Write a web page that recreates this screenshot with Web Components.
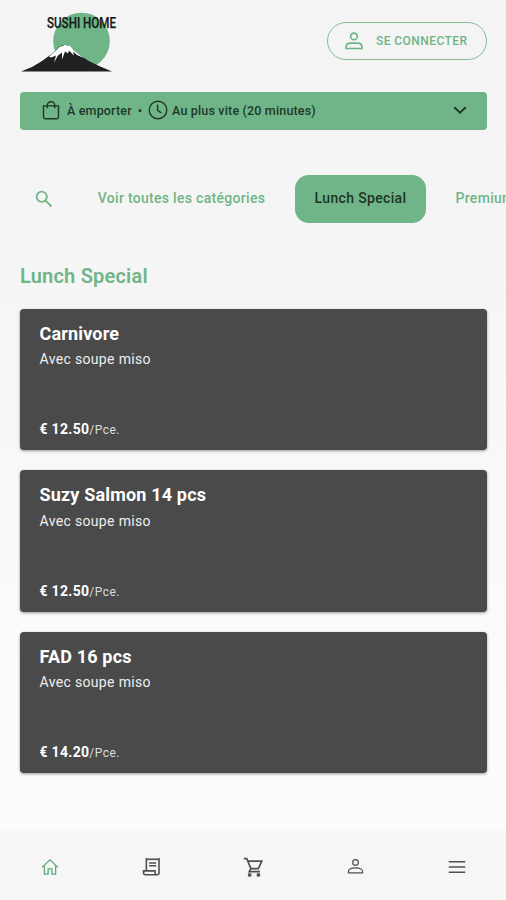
<!DOCTYPE html>
<html lang="fr">
<head>
<meta charset="utf-8">
<title>Sushi Home</title>
<style>
html,body{margin:0;height:100%}
body{font-family:Roboto,"Liberation Sans",sans-serif;overflow:hidden;--green:#70b587;--ink:#20382a}
</style>
</head>
<body>
<sushi-app></sushi-app>
<script>
const define = (name, html, setup) => customElements.define(name, class extends HTMLElement {
  connectedCallback() {
    if (this.shadowRoot) return;
    const t = document.createElement('template');
    t.innerHTML = html;
    this.attachShadow({mode: 'open'}).append(t.content.cloneNode(true));
    if (setup) setup(this, this.shadowRoot);
  }
});

const icons = {
  user: '<circle cx="12" cy="6.500" r="4"/><path d="M2.500 21v-2c0-3 2.200-4.500 5-4.500h9c2.800 0 5 1.500 5 4.500v2z"/>',
  person: '<circle cx="12" cy="6.200" r="4"/><path d="M2 21v-1.500c0-3.600 4.500-5.500 10-5.500s10 1.900 10 5.500V21z"/>',
  bag: '<path d="M3 7h18v13.500a2 2 0 0 1-2 2H5a2 2 0 0 1-2-2zM7.500 10V6.500a4.500 4.500 0 0 1 9 0V10"/>',
  clock: '<circle cx="12" cy="12" r="10.500"/><path d="M11.500 5.500v7l4.500 3"/>',
  chevron: '<path d="M3.500 8l8.500 8 8.500-8"/>',
  search: '<circle cx="9" cy="9" r="6.800"/><path d="M13.700 13.700l8.300 8.300"/>',
  home: '<path d="M1.500 12.500L12 2.500l10.500 10M4.500 10v11.500h5V14.500h5v7h5V10"/>',
  receipt: '<path d="M5.500 17V2.500l2 .7 2-.7 2 .7 2-.7 2 .7 2-.7 2 .7 2-.7V20a2.500 2.500 0 0 1-2.500 2.500H4.500A2.500 2.500 0 0 1 2 20v-2.500h14.500V20a2.500 2.500 0 0 0 2.800 2.500M9 7.500h9M9 11h9"/>',
  cart: '<path d="M1 2h3.500l5 12h9L22.500 5H6M9.500 14l-2 3.500h13"/><circle cx="8" cy="21.500" r="1.300"/><circle cx="18.500" cy="21.500" r="1.300"/>',
  menu: '<path d="M1 5h22M1 12h22M1 19h22"/>'
};
define('ui-icon', `<style>:host{display:block;flex:none;width:var(--s,20px);height:var(--s,20px)}svg{display:block;width:100%;height:100%;fill:none;stroke:currentColor;stroke-width:var(--w,2)}</style><svg viewBox="0 0 24 24"></svg>`,
  (el, root) => { root.querySelector('svg').innerHTML = icons[el.getAttribute('name')]; });

define('brand-logo', `<style>:host{display:block;width:100px;height:64px}svg{display:block}text{font:500 14.500px Roboto,sans-serif}</style>
<svg width="100" height="64" viewBox="20 10 100 64">
<circle cx="81.500" cy="41" r="28.300" fill="#70b587"/>
<path d="M21 71.500l11-4.500 10-6 11-8 7-7 3-.5 2-1 2 1.500 3-.5 6 7 12 8 10 5 14 6z" fill="#202122"/>
<path d="M49 56.500l6-5 5-5 3-.5 2-1.500 2 1.500 3-.5 5 6 9 6.500-7-3-4-3.500 1 4-5-5-1 3-3-2-3 8 0-7-4 3-4 7 2-7-5 2z" fill="#fff"/>
<text x="47" y="28" textLength="69" lengthAdjust="spacingAndGlyphs" fill="#151c18" stroke="#151c18" stroke-width=".25">SUSHI HOME</text>
</svg>`);

define('login-button', `<style>:host{display:flex;box-sizing:border-box;align-items:center;width:160px;height:38px;border:1.300px solid #82bd96;border-radius:20px;color:#70b587;padding:0 0 1px 16px;gap:12px;font-size:12px;font-weight:500;letter-spacing:.44px;white-space:nowrap}ui-icon{--s:20px;--w:2}</style><ui-icon name="user"></ui-icon><slot></slot>`);

define('order-bar', `<style>:host{display:flex;box-sizing:border-box;align-items:center;height:38.500px;margin:0 19px 0 20px;padding:0 19px 1.500px 21px;border-radius:4px;background:var(--green);color:var(--ink);font-size:12.500px;font-weight:500;letter-spacing:.17px;white-space:nowrap}
ui-icon{--s:20px;--w:1.700}.mode{margin-left:6px;width:65px}.dot{width:16px;text-align:center}.when{margin-left:4px}.end{margin-left:auto;--s:16px;--w:3}</style>
<ui-icon name="bag"></ui-icon><span class="mode"><slot name="mode"></slot></span><span class="dot">•</span><ui-icon name="clock"></ui-icon><span class="when"><slot name="when"></slot></span><ui-icon class="end" name="chevron"></ui-icon>`);

define('category-tab', `<style>:host{display:flex;flex:none;box-sizing:border-box;align-items:center;justify-content:center;height:48px;padding:0 19.500px 2px;border-radius:14px;color:var(--green);font-size:14px;font-weight:500;letter-spacing:.3px;white-space:nowrap}:host([active]){background:var(--green);color:#1c3526;letter-spacing:.35px;width:131px;padding:0 0 2px}:host([all]){width:208px;padding:0 0 2px 1px}</style><slot></slot>`);
define('category-tabs', `<style>:host{display:flex;align-items:center;height:48px;padding-left:35px;overflow:hidden}ui-icon{color:var(--green);--s:18px;--w:2.400;margin:0 24px 1px 0}</style><ui-icon name="search"></ui-icon><slot></slot>`);

define('product-card', `<style>:host{display:flex;flex-direction:column;box-sizing:border-box;height:141.500px;padding:14px 20px 11px 19.500px;border-radius:4px;background:#4a4a4a;color:#fff;box-shadow:0 1px 3px #0006}
.n{font-size:18px;line-height:22px;font-weight:700;letter-spacing:.17px}.d{font-size:14px;line-height:20px;margin-top:4.500px;letter-spacing:.34px;color:#eee}.p{margin-top:auto;font-size:14px;line-height:18px;font-weight:700;letter-spacing:.3px}small{font-size:12px;font-weight:400;color:#ddd;letter-spacing:.45px}</style>
<div class="n"><slot name="name"></slot></div><div class="d"><slot name="info"></slot></div><div class="p"><slot name="price"></slot><small>/Pce.</small></div>`);

define('bottom-nav', `<style>:host{display:flex;box-sizing:border-box;height:68px;background:#f6f6f6;color:#505050;box-shadow:0 -1px 4px #00000006;align-items:center;justify-content:space-between;padding:1px 40px 0 41px}ui-icon{--s:18px;--w:1.700}.on{color:#5bac79}.p{--s:17px;margin-right:2px}</style>
<ui-icon class="on" name="home"></ui-icon><ui-icon name="receipt" style="--s:19px;--w:2"></ui-icon><ui-icon name="cart" style="--s:20px;--w:2;margin-right:1px"></ui-icon><ui-icon class="p" name="person"></ui-icon><ui-icon name="menu"></ui-icon>`);

define('sushi-app', `<style>:host{display:flex;flex-direction:column;width:506px;height:900px;overflow:hidden;background:linear-gradient(#f4f4f4 0,#f5f5f5 250px,#fcfcfc 700px)}
header{display:flex;justify-content:space-between;align-items:flex-start;box-sizing:border-box;height:91.500px;padding:10px 19px 0 20px}login-button{margin-top:12px}
category-tabs{margin-top:45px}h1{margin:40px 20px 0;font-size:20px;line-height:26px;font-weight:600;letter-spacing:.2px;color:var(--green)}
main{display:flex;flex-direction:column;gap:20px;padding:19.500px 19px 0 20px}bottom-nav{margin-top:auto}</style>
<header><brand-logo></brand-logo><login-button>SE CONNECTER</login-button></header>
<order-bar><span slot="mode">À emporter</span><span slot="when">Au plus vite (20 minutes)</span></order-bar>
<category-tabs><category-tab all>Voir toutes les catégories</category-tab><category-tab active style="margin:0 10px">Lunch Special</category-tab><category-tab>Premium</category-tab></category-tabs>
<h1>Lunch Special</h1>
<main>
<product-card><span slot="name">Carnivore</span><span slot="info">Avec soupe miso</span><span slot="price">€ 12.50</span></product-card>
<product-card><span slot="name">Suzy Salmon 14 pcs</span><span slot="info">Avec soupe miso</span><span slot="price">€ 12.50</span></product-card>
<product-card><span slot="name">FAD 16 pcs</span><span slot="info">Avec soupe miso</span><span slot="price">€ 14.20</span></product-card>
</main><bottom-nav></bottom-nav>`);
</script>
</body>
</html>
